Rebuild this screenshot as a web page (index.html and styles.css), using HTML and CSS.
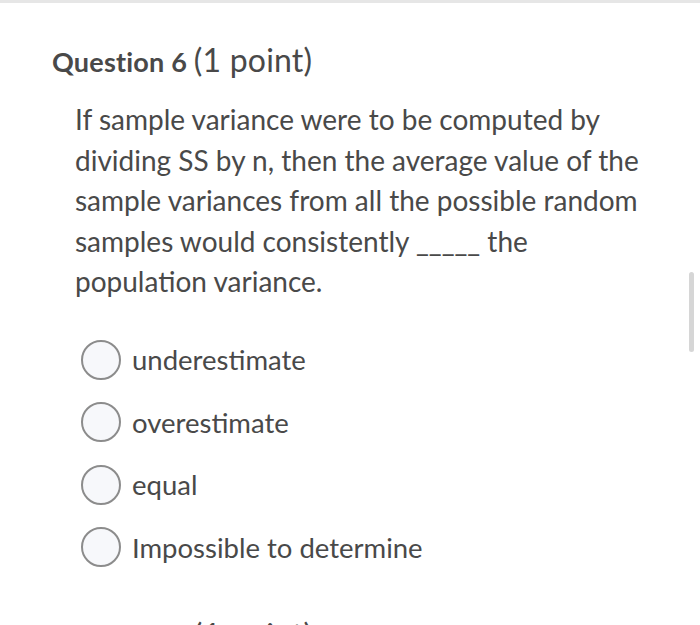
FILE: index.html
```html
<!DOCTYPE html>
<html>
<head>
<meta charset="utf-8">
<link rel="stylesheet" href="styles.css">
</head>
<body>
<div class="page">
  <section class="question">
    <h2 class="q-title"><span class="q-num">Question 6</span> <span class="q-pts">(1 point)</span></h2>
    <p class="q-text">If sample variance were to be computed by dividing SS by n, then the average value of the sample variances from all the possible random samples would consistently _____ the population variance.</p>
    <ul class="options">
      <li class="option"><span class="radio"></span><span class="opt-label">underestimate</span></li>
      <li class="option"><span class="radio"></span><span class="opt-label">overestimate</span></li>
      <li class="option"><span class="radio"></span><span class="opt-label">equal</span></li>
      <li class="option"><span class="radio"></span><span class="opt-label">Impossible to determine</span></li>
    </ul>
  </section>
  <section class="question">
    <h2 class="q-title"><span class="q-num">Question 7</span> <span class="q-pts">(1 point)</span></h2>
  </section>
  <div class="scrollbar"></div>
</div>
</body>
</html>
```
FILE: styles.css
```css
html, body {
  margin: 0;
  padding: 0;
  background: #ffffff;
}
body {
  font-family: Lato, "Open Sans", sans-serif;
  color: #494949;
  height: 625px;
  overflow: hidden;
}
.page {
  position: relative;
  border-top: 3px solid #e6e6e6;
  padding-left: 52px;
  padding-top: 37px;
}
.q-title {
  margin: 0;
  font-weight: 700;
  font-size: 27px;
  line-height: 40px;
  letter-spacing: 0.2px;
}
.q-pts {
  font-weight: 400;
  font-size: 32px;
}
.q-text {
  margin: 17px 0 0 23px;
  width: 568px;
  font-size: 28px;
  line-height: 40.5px;
}
.options {
  list-style: none;
  margin: 38px 0 0 29px;
  padding: 0;
  display: flex;
  flex-direction: column;
  gap: 22.5px;
}
.option {
  display: flex;
  align-items: center;
  gap: 11px;
  height: 40px;
  font-size: 27.5px;
}
.radio {
  width: 36px;
  height: 36px;
  border: 2px solid #8c8c8c;
  border-radius: 50%;
  background: #f7f8fb;
  flex: none;
}
.question + .question {
  margin-top: 48px;
}
.scrollbar {
  position: absolute;
  left: 689px;
  top: 269px;
  width: 5px;
  height: 80px;
  border-radius: 3px;
  background: #d6d6d6;
}
```
